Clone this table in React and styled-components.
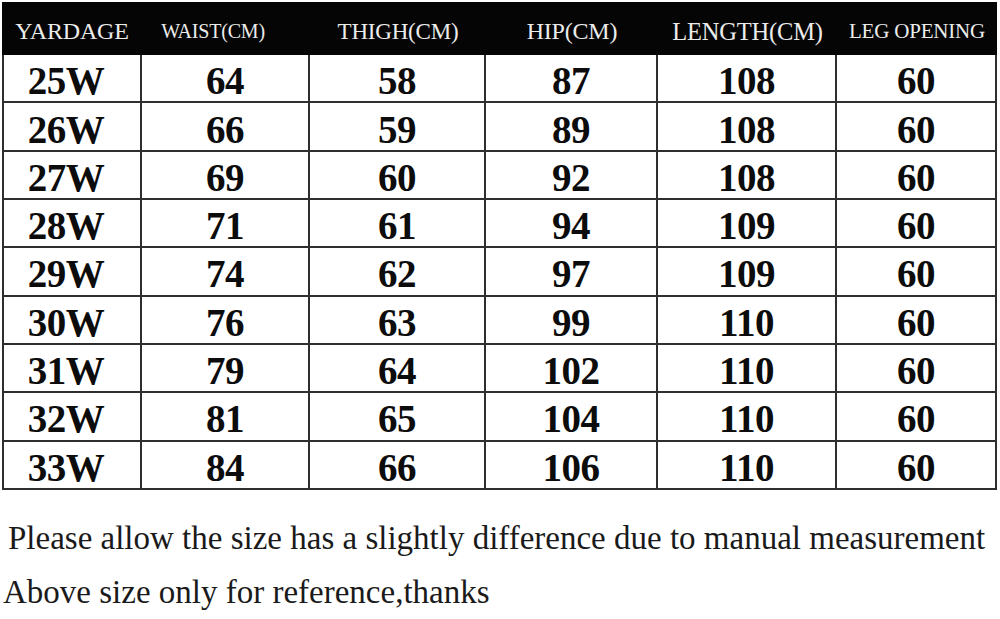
import React from "react";
import styled, { createGlobalStyle } from "styled-components";

const serif = `"Liberation Serif", "DejaVu Serif", serif`;

const GlobalStyle = createGlobalStyle`
  html, body {
    margin: 0;
    padding: 0;
    background: #ffffff;
  }
  body {
    font-family: ${serif};
    color: #111;
  }
`;

const Page = styled.div`
  width: 1000px;
  height: 619px;
  padding: 2px 3px 0 2px;
  box-sizing: border-box;
  overflow: hidden;
`;

const Table = styled.div`
  display: grid;
  grid-template-columns: 140px 168px 176px 172px 179px 160px;
  grid-template-rows: 53px;
  grid-auto-rows: 48.33px;
  width: 995px;
`;

const HeadCell = styled.div`
  background: #050505;
  color: #ececec;
  font-family: ${serif};
  font-size: ${(p) => p.size}px;
  display: flex;
  align-items: center;
  justify-content: center;
  padding-top: 6px;
  padding-right: ${(p) => p.shift || 0}px;
  box-sizing: border-box;
  white-space: nowrap;
  letter-spacing: -0.2px;
`;

const Cell = styled.div`
  display: flex;
  align-items: center;
  justify-content: center;
  padding-top: 5px;
  padding-right: ${(p) => p.shift || 0}px;
  box-sizing: border-box;
  font-family: ${serif};
  font-weight: 700;
  font-size: 39px;
  letter-spacing: -0.5px;
  color: #0c0c0c;
  border-right: 2px solid #2e2e2e;
  border-bottom: 2px solid #2e2e2e;
  border-left: ${(p) => (p.first ? "2px solid #2e2e2e" : "none")};
`;

const Notes = styled.div`
  margin-top: 21px;
`;

const Note = styled.p`
  margin: 0;
  font-family: ${serif};
  font-size: 33px;
  line-height: 54px;
  color: #1a1a1a;
  padding-left: ${(p) => p.indent || 0}px;
  white-space: nowrap;
`;

const headers = [
  { label: "YARDAGE", size: 24 },
  { label: "WAIST(CM)", size: 20, shift: 26 },
  { label: "THIGH(CM)", size: 23 },
  { label: "HIP(CM)", size: 24 },
  { label: "LENGTH(CM)", size: 24.5 },
  { label: "LEG OPENING", size: 21 },
];

const rows = [
  ["25W", 64, 58, 87, 108, 60],
  ["26W", 66, 59, 89, 108, 60],
  ["27W", 69, 60, 92, 108, 60],
  ["28W", 71, 61, 94, 109, 60],
  ["29W", 74, 62, 97, 109, 60],
  ["30W", 76, 63, 99, 110, 60],
  ["31W", 79, 64, 102, 110, 60],
  ["32W", 81, 65, 104, 110, 60],
  ["33W", 84, 66, 106, 110, 60],
];

export default function App() {
  return (
    <>
      <GlobalStyle />
      <Page>
        <Table>
          {headers.map((h) => (
            <HeadCell key={h.label} size={h.size} shift={h.shift}>
              {h.label}
            </HeadCell>
          ))}
          {rows.map((r) =>
            r.map((v, i) => (
              <Cell key={r[0] + i} first={i === 0} shift={i === 0 ? 12 : 0}>
                {v}
              </Cell>
            ))
          )}
        </Table>
        <Notes>
          <Note indent={6}>
            Please allow the size has a slightly difference due to manual measurement
          </Note>
          <Note indent={1}>Above size only for reference,thanks</Note>
        </Notes>
      </Page>
    </>
  );
}
